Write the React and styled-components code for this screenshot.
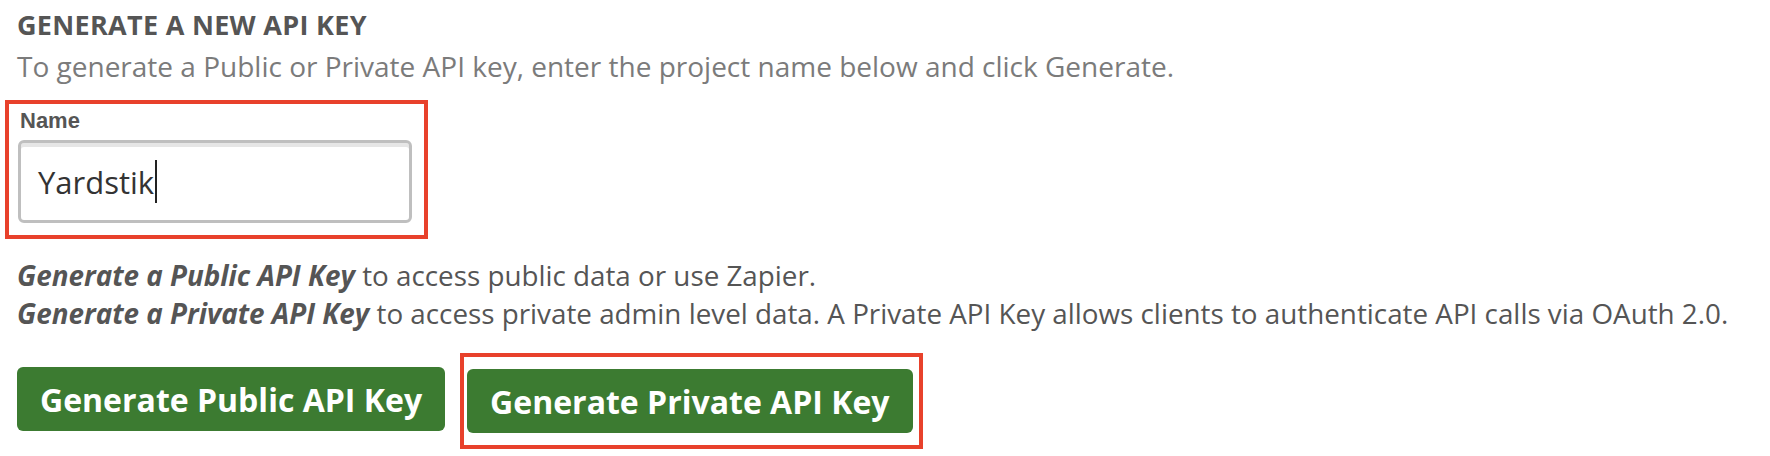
import styled, { createGlobalStyle } from "styled-components";

const GlobalStyle = createGlobalStyle`
  body {
    margin: 0;
    background: #fff;
    font-family: "Open Sans", "Noto Sans", sans-serif;
  }
`;

const Page = styled.section`
  padding: 9px 17px 0;
  width: 1770px;
  height: 456px;
  box-sizing: border-box;
  overflow: hidden;
`;

const Title = styled.h2`
  margin: 0;
  font-size: 27px;
  line-height: 32px;
  font-weight: 700;
  letter-spacing: 0.3px;
  color: #555;
  text-transform: uppercase;
`;

const Subtitle = styled.p`
  margin: 9px 0 0;
  font-size: 28px;
  line-height: 32px;
  color: #7b7b7b;
`;

// red annotation frame, pulled out with negative margins so it does not move the content
const Highlight = styled.div`
  display: ${({ $inline }) => ($inline ? "block" : "inline-block")};
  border: 4px solid #e8412b;
  padding: ${({ $pad }) => $pad};
  margin: ${({ $margin }) => $margin};
`;

const FieldGroup = styled.div`
  display: flex;
  flex-direction: column;
  gap: 6px;
`;

const Label = styled.label`
  font-family: "Liberation Sans", Arial, sans-serif;
  font-weight: 700;
  font-size: 22px;
  line-height: 26px;
  color: #555;
  padding-left: 2px;
`;

const TextField = styled.div`
  display: flex;
  align-items: center;
  width: 394px;
  height: 83px;
  box-sizing: border-box;
  padding-left: 17px;
  border: 3px solid #bfbfbf;
  border-radius: 6px;
  box-shadow: inset 0 4px 0 #e6e6e6;
  font-size: 31px;
  color: #333;
`;

const Caret = styled.span`
  display: inline-block;
  width: 2px;
  height: 43px;
  margin-left: 1px;
  background: #222;
`;

const Desc = styled.div`
  margin-top: 17px;
  font-size: 27.8px;
  line-height: 38px;
  color: #555;
`;

const DescLine = styled.p`
  margin: 0;

  b {
    font-style: italic;
    font-weight: 700;
  }
`;

const Actions = styled.div`
  display: flex;
  align-items: flex-start;
  gap: 22px;
  margin-top: 35px;
`;

const Button = styled.button`
  height: 64px;
  padding: 0 23px;
  border: none;
  border-radius: 6px;
  background: #3c7b31;
  color: #fff;
  font-family: "Open Sans", "Noto Sans", sans-serif;
  font-weight: 700;
  font-size: 32px;
  cursor: pointer;
`;

export default function App() {
  return (
    <Page>
      <GlobalStyle />
      <Title>Generate a new API key</Title>
      <Subtitle>
        To generate a Public or Private API key, enter the project name below and click Generate.
      </Subtitle>

      <Highlight $pad="4px 12px 12px 9px" $margin="18px 0 0 -12px">
        <FieldGroup>
          <Label htmlFor="project-name">Name</Label>
          <TextField id="project-name" role="textbox">
            Yardstik
            <Caret />
          </TextField>
        </FieldGroup>
      </Highlight>

      <Desc>
        <DescLine>
          <b>Generate a Public API Key</b> to access public data or use Zapier.
        </DescLine>
        <DescLine>
          <b>Generate a Private API Key</b> to access private admin level data. A Private API Key
          allows clients to authenticate API calls via OAuth 2.0.
        </DescLine>
      </Desc>

      <Actions>
        <Button type="button">Generate Public API Key</Button>
        <Highlight $inline $pad="12px 6px 12px 3px" $margin="-14px -10px 0 -7px">
          <Button type="button">Generate Private API Key</Button>
        </Highlight>
      </Actions>
    </Page>
  );
}
